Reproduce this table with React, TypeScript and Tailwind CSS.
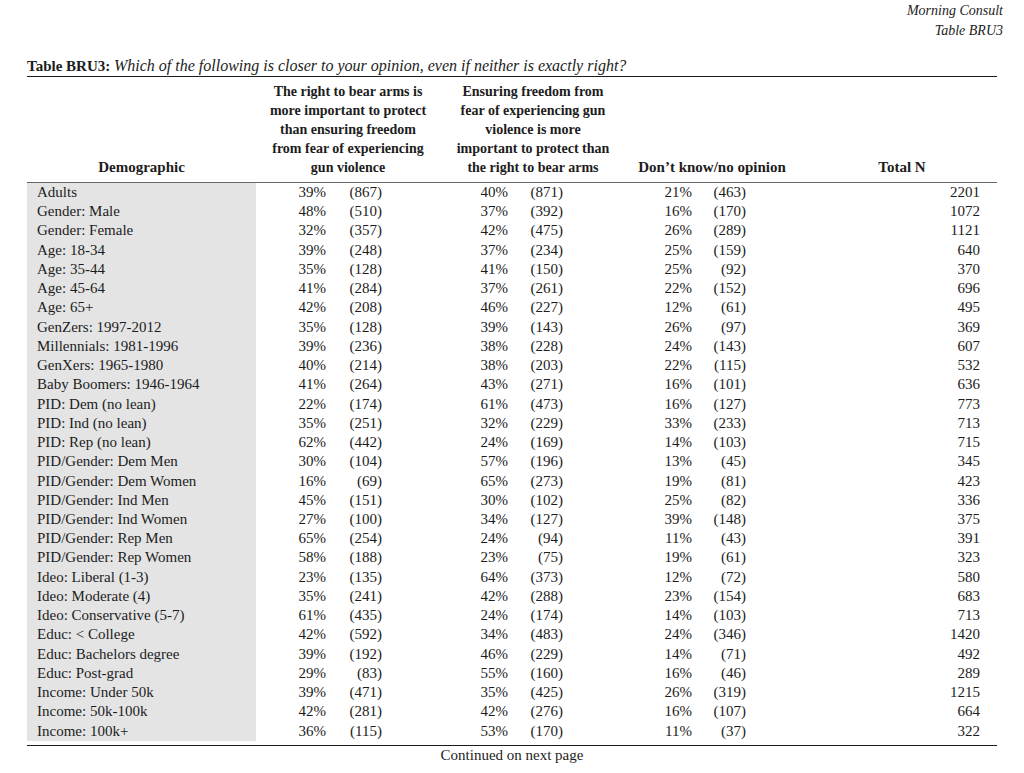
type Row = [string, string, string, string, string, string, string, string];

const rows: Row[] = [
  ["Adults", "39%", "(867)", "40%", "(871)", "21%", "(463)", "2201"],
  ["Gender: Male", "48%", "(510)", "37%", "(392)", "16%", "(170)", "1072"],
  ["Gender: Female", "32%", "(357)", "42%", "(475)", "26%", "(289)", "1121"],
  ["Age: 18-34", "39%", "(248)", "37%", "(234)", "25%", "(159)", "640"],
  ["Age: 35-44", "35%", "(128)", "41%", "(150)", "25%", "(92)", "370"],
  ["Age: 45-64", "41%", "(284)", "37%", "(261)", "22%", "(152)", "696"],
  ["Age: 65+", "42%", "(208)", "46%", "(227)", "12%", "(61)", "495"],
  ["GenZers: 1997-2012", "35%", "(128)", "39%", "(143)", "26%", "(97)", "369"],
  ["Millennials: 1981-1996", "39%", "(236)", "38%", "(228)", "24%", "(143)", "607"],
  ["GenXers: 1965-1980", "40%", "(214)", "38%", "(203)", "22%", "(115)", "532"],
  ["Baby Boomers: 1946-1964", "41%", "(264)", "43%", "(271)", "16%", "(101)", "636"],
  ["PID: Dem (no lean)", "22%", "(174)", "61%", "(473)", "16%", "(127)", "773"],
  ["PID: Ind (no lean)", "35%", "(251)", "32%", "(229)", "33%", "(233)", "713"],
  ["PID: Rep (no lean)", "62%", "(442)", "24%", "(169)", "14%", "(103)", "715"],
  ["PID/Gender: Dem Men", "30%", "(104)", "57%", "(196)", "13%", "(45)", "345"],
  ["PID/Gender: Dem Women", "16%", "(69)", "65%", "(273)", "19%", "(81)", "423"],
  ["PID/Gender: Ind Men", "45%", "(151)", "30%", "(102)", "25%", "(82)", "336"],
  ["PID/Gender: Ind Women", "27%", "(100)", "34%", "(127)", "39%", "(148)", "375"],
  ["PID/Gender: Rep Men", "65%", "(254)", "24%", "(94)", "11%", "(43)", "391"],
  ["PID/Gender: Rep Women", "58%", "(188)", "23%", "(75)", "19%", "(61)", "323"],
  ["Ideo: Liberal (1-3)", "23%", "(135)", "64%", "(373)", "12%", "(72)", "580"],
  ["Ideo: Moderate (4)", "35%", "(241)", "42%", "(288)", "23%", "(154)", "683"],
  ["Ideo: Conservative (5-7)", "61%", "(435)", "24%", "(174)", "14%", "(103)", "713"],
  ["Educ: < College", "42%", "(592)", "34%", "(483)", "24%", "(346)", "1420"],
  ["Educ: Bachelors degree", "39%", "(192)", "46%", "(229)", "14%", "(71)", "492"],
  ["Educ: Post-grad", "29%", "(83)", "55%", "(160)", "16%", "(46)", "289"],
  ["Income: Under 50k", "39%", "(471)", "35%", "(425)", "26%", "(319)", "1215"],
  ["Income: 50k-100k", "42%", "(281)", "42%", "(276)", "16%", "(107)", "664"],
  ["Income: 100k+", "36%", "(115)", "53%", "(170)", "11%", "(37)", "322"]
];

const head1 = [
  "The right to bear arms is",
  "more important to protect",
  "than ensuring freedom",
  "from fear of experiencing",
  "gun violence"
];

const head2 = [
  "Ensuring freedom from",
  "fear of experiencing gun",
  "violence is more",
  "important to protect than",
  "the right to bear arms"
];

export default function App() {
  return (
    <div className="h-[773px] w-[1024px] overflow-hidden bg-white px-[27px] font-['Liberation_Serif',serif] text-[#1c1c1c]">
      <div className="mr-[-6px] pt-[1px] text-right text-[14px] leading-[20px] italic">
        <div>Morning Consult</div>
        <div>Table BRU3</div>
      </div>

      <div className="mt-[15px] border-b border-[#1c1c1c] text-[15px] leading-[20px]">
        <span className="font-bold">Table BRU3:</span>{" "}
        <span className="text-[16px] italic">
          Which of the following is closer to your opinion, even if neither is exactly right?
        </span>
      </div>

      <div className="grid grid-cols-[229px_184px_186px_172px_199px] items-end border-b-[1.5px] border-[#666] pt-[5px] pb-[5px] text-center text-[14px] leading-[19px] font-bold">
        <div className="text-[15px]">Demographic</div>
        <div className="whitespace-nowrap">
          {head1.map((line) => (
            <div key={line}>{line}</div>
          ))}
        </div>
        <div className="whitespace-nowrap">
          {head2.map((line) => (
            <div key={line}>{line}</div>
          ))}
        </div>
        <div className="text-[15px]">Don’t know/no opinion</div>
        <div className="pl-[9px] text-[15px]">Total N</div>
      </div>

      <div className="text-[15px] leading-[19.24px]">
        {rows.map((r) => (
          <div
            key={r[0]}
            className="grid grid-cols-[229px_70px_56px_126px_55px_129px_54px_234px_17px]"
          >
            <div className="bg-[#e4e4e4] pl-[10px]">{r[0]}</div>
            <div className="text-right">{r[1]}</div>
            <div className="text-right">{r[2]}</div>
            <div className="text-right">{r[3]}</div>
            <div className="text-right">{r[4]}</div>
            <div className="text-right">{r[5]}</div>
            <div className="text-right">{r[6]}</div>
            <div className="text-right">{r[7]}</div>
            <div />
          </div>
        ))}
      </div>

      <div className="mt-[4px] border-t-[1.5px] border-[#1c1c1c] text-center text-[15px] leading-[19px]">
        Continued on next page
      </div>
    </div>
  );
}
